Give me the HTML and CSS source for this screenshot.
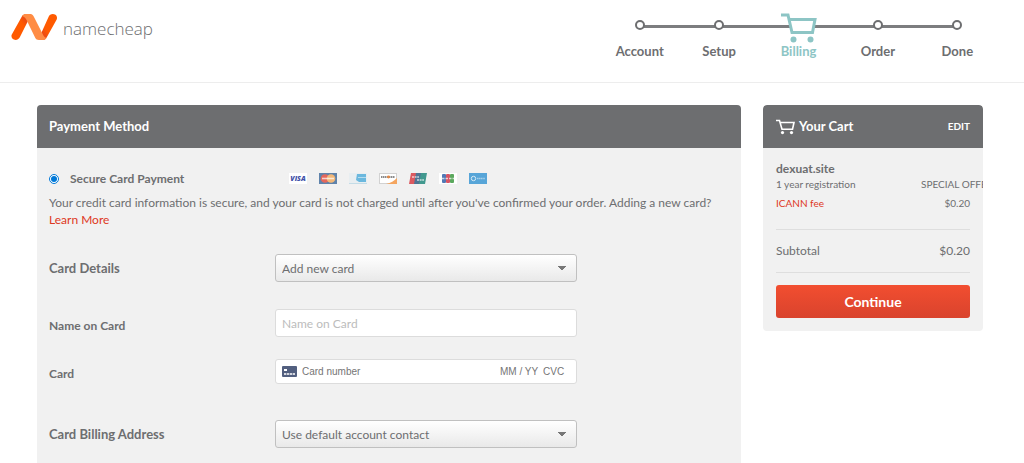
FILE: index.html
```html
<!DOCTYPE html>
<html lang="en">

<head>
    <meta charset="UTF-8">
    <meta name="viewport" content="width=device-width, initial-scale=1.0">
    <title>Billing - Namecheap</title>
    <link rel="stylesheet" href="styles.css">
</head>

<body>
    <header class="site-header">
        <a class="logo" href="#">
            <svg class="logo-mark" width="48" height="28" viewBox="0 0 48 28" aria-hidden="true">
                <defs>
                    <linearGradient id="leg-left" x1="0" y1="1" x2="1" y2="0">
                        <stop offset="0.6" stop-color="#ff5a00" />
                        <stop offset="1" stop-color="#d4362c" />
                    </linearGradient>
                    <linearGradient id="leg-right" x1="0" y1="1" x2="1" y2="0">
                        <stop offset="0" stop-color="#d4362c" />
                        <stop offset="0.4" stop-color="#ff5a00" />
                    </linearGradient>
                </defs>
                <path d="M11 3.2C12 1.6 14 1 16 1L19 4L9.2 23.6C8.2 26 6.6 27 4.6 27C1.4 27 -0.4 24 0.8 21.4Z" fill="url(#leg-left)" />
                <path d="M35.5 24.8C34.5 26.4 33.5 27 31.5 27L28.5 24L37.3 4.4C38.3 2 39.9 1 41.9 1C45.1 1 46.9 4 45.7 6.6Z" fill="url(#leg-right)" />
                <path d="M11 3C12 1.6 13.4 1 15.4 1H18.6C20.6 1 21.8 1.6 22.6 3.2L31.4 20.6C32.4 22.6 33.2 24.4 35.4 25C34.6 26.4 33.4 27 31.6 27H28C26 27 25 26.4 24.2 24.8L15.8 7.4C14.8 5.4 13.6 3.6 11 3Z" fill="#ff8c44" />
            </svg>
            <span class="logo-text">namecheap</span>
        </a>
        <ol class="steps">
            <li class="step"><span class="step-dot"></span>Account</li>
            <li class="step"><span class="step-dot"></span>Setup</li>
            <li class="step step-current" aria-current="step">
                <svg class="step-cart" width="36" height="30" viewBox="0 0 36 30" aria-hidden="true">
                    <path d="M8 5.5H34L31.5 19.5H11Z" fill="#fff" />
                    <path d="M0 2H7L11 19.5H31.5L34 6.5H8" fill="none" stroke="#8dc5c5" stroke-width="3" />
                    <circle cx="12.5" cy="26.5" r="3" fill="#8dc5c5" />
                    <circle cx="29.5" cy="26.5" r="3" fill="#8dc5c5" />
                </svg>
                Billing
            </li>
            <li class="step"><span class="step-dot"></span>Order</li>
            <li class="step"><span class="step-dot"></span>Done</li>
        </ol>
    </header>

    <main class="checkout">
        <section class="panel">
            <h2 class="panel-title">Payment Method</h2>
            <form class="panel-body">
                <div class="method">
                    <input class="method-radio" type="radio" id="secure-card" name="method" checked>
                    <label class="method-label" for="secure-card">Secure Card Payment</label>
                    <div class="brands">
                        <svg width="18" height="11" viewBox="0 0 18 11" role="img" aria-label="Visa">
                            <rect width="18" height="11" fill="#fff" />
                            <text class="brand-visa" x="9" y="8" text-anchor="middle">VISA</text>
                        </svg>
                        <svg width="18" height="11" viewBox="0 0 18 11" role="img" aria-label="MasterCard">
                            <rect width="18" height="11" fill="#5f83ab" />
                            <circle cx="6" cy="5.5" r="4.3" fill="#e4675c" />
                            <circle cx="12" cy="5.5" r="4.3" fill="#f3b878" />
                            <path d="M3 5.5H15" stroke="#fff" stroke-width="1.6" opacity="0.7" />
                        </svg>
                        <svg width="18" height="11" viewBox="0 0 18 11" role="img" aria-label="American Express">
                            <rect width="18" height="11" fill="#e8eef1" />
                            <path d="M8 1H17V9H10L7 7Z" fill="#6bb8de" />
                            <path d="M9 4.5H17" stroke="#b5dcee" />
                            <path d="M0 10.5H18" stroke="#c4dce7" />
                        </svg>
                        <svg width="18" height="11" viewBox="0 0 18 11" role="img" aria-label="Discover">
                            <rect x="0.5" y="0.5" width="17" height="10" fill="#fff" stroke="#d2d2d2" />
                            <path d="M18 5V11H7C12 10 15 8 18 5Z" fill="#f4a55f" />
                            <path d="M2 4H16" stroke="#8b8b8b" stroke-width="2" stroke-dasharray="1.5 0.5" />
                            <circle cx="9.5" cy="4" r="1.4" fill="#e88a45" />
                        </svg>
                        <svg width="18" height="11" viewBox="0 0 18 11" role="img" aria-label="UnionPay">
                            <path d="M2 0H8L6 11H0Z" fill="#dc5960" />
                            <path d="M7 0H13L11 11H5Z" fill="#4f7594" />
                            <path d="M12 0H18L16 11H10Z" fill="#42998f" />
                            <path d="M3 4H10M8 7H15" stroke="#fff" stroke-width="1.6" stroke-dasharray="2 0.6" opacity="0.7" />
                        </svg>
                        <svg width="18" height="11" viewBox="0 0 18 11" role="img" aria-label="JCB">
                            <rect width="18" height="11" fill="#fff" />
                            <rect x="3" y="1" width="4" height="9" rx="1" fill="#5279b5" />
                            <rect x="7" y="1" width="4" height="9" rx="1" fill="#d75564" />
                            <rect x="11" y="1" width="4" height="9" rx="1" fill="#5ba85d" />
                            <path d="M3 5.5H15" stroke="#fff" stroke-width="1.5" stroke-dasharray="2.5 1" opacity="0.7" />
                        </svg>
                        <svg width="18" height="11" viewBox="0 0 18 11" role="img" aria-label="Diners Club">
                            <rect width="18" height="11" fill="#57a5d8" />
                            <circle cx="4.5" cy="5.5" r="2.2" fill="none" stroke="#d7ebf6" />
                            <path d="M8 5.5H16" stroke="#a5d0ea" stroke-width="1.6" stroke-dasharray="1.4 0.4" />
                        </svg>
                    </div>
                </div>
                <p class="method-note">Your credit card information is secure, and your card is not charged until after you've confirmed your order. Adding a new card? <a href="#">Learn More</a></p>

                <div class="field">
                    <label class="field-label field-label-lg" for="card-details">Card Details</label>
                    <select class="control select" id="card-details">
                        <option>Add new card</option>
                    </select>
                </div>

                <div class="card-fields">
                    <div class="field">
                        <label class="field-label" for="card-name">Name on Card</label>
                        <input class="control" type="text" id="card-name" placeholder="Name on Card">
                    </div>
                    <div class="field">
                        <label class="field-label" for="card-number">Card</label>
                        <div class="control card-box">
                            <svg width="15" height="11" viewBox="0 0 15 11" aria-hidden="true">
                                <rect width="15" height="11" rx="1" fill="#525f7f" />
                                <rect x="2" y="3" width="3" height="2" fill="#fff" />
                                <path d="M2 8H13" stroke="#fff" stroke-width="1.4" stroke-dasharray="2.3 0.6" />
                            </svg>
                            <input class="card-number" type="text" id="card-number" placeholder="Card number">
                            <input class="card-expiry" type="text" placeholder="MM / YY" aria-label="Expiry date">
                            <input class="card-cvc" type="text" placeholder="CVC" aria-label="CVC">
                        </div>
                    </div>
                </div>

                <div class="field">
                    <label class="field-label field-label-lg" for="billing-address">Card Billing Address</label>
                    <select class="control select" id="billing-address">
                        <option>Use default account contact</option>
                    </select>
                </div>
            </form>
        </section>

        <aside class="cart">
            <div class="panel-title cart-title">
                <svg width="19" height="16" viewBox="0 0 19 16" aria-hidden="true">
                    <path d="M0 1.5H3.5L6 10.2H16.5L18 3.5H4.5" fill="none" stroke="#fff" stroke-width="1.6" />
                    <circle cx="6.5" cy="13.6" r="1.6" fill="#fff" />
                    <circle cx="15.5" cy="13.6" r="1.6" fill="#fff" />
                </svg>
                <h2>Your Cart</h2>
                <a class="cart-edit" href="#">EDIT</a>
            </div>
            <div class="cart-body">
                <h3 class="cart-domain">dexuat.site</h3>
                <div class="cart-line">
                    <span>1 year registration</span>
                    <span class="cart-offer">SPECIAL OFFER</span>
                </div>
                <div class="cart-line cart-fee">
                    <a href="#">ICANN fee</a>
                    <span>$0.20</span>
                </div>
                <div class="cart-subtotal">
                    <span>Subtotal</span>
                    <span>$0.20</span>
                </div>
                <button class="continue-btn" type="button">Continue</button>
            </div>
        </aside>
    </main>
</body>

</html>
```
FILE: styles.css
```css
* {
    margin: 0;
    padding: 0;
    box-sizing: border-box;
}

:root {
    --text-color: #6d6e70;
    --panel-bg: #f1f1f1;
    --title-bg: #6d6e70;
    --link-color: #de3723;
    --teal: #8dc5c5;
    --line-color: #dedede;
}

body {
    display: flex;
    flex-direction: column;
    min-height: 100vh;
    font-family: Lato, sans-serif;
    font-size: 12px;
    line-height: 17px;
    background-color: #fff;
    color: var(--text-color);
}

a {
    color: var(--link-color);
    text-decoration: none;
}

svg {
    display: block;
    flex-shrink: 0;
}

/* Header */
.site-header {
    display: flex;
    justify-content: space-between;
    align-items: flex-start;
    height: 83px;
    padding: 13px 27px 0 11px;
    border-bottom: 1px solid #ededed;
}

.logo {
    display: flex;
    align-items: center;
    gap: 4px;
    color: var(--text-color);
}

.logo-text {
    padding-top: 4px;
    font-family: "Open Sans", sans-serif;
    font-size: 17px;
    font-weight: 300;
    line-height: 24px;
}

.steps {
    display: flex;
    width: 397px;
    list-style: none;
}

.step {
    position: relative;
    flex: 1;
    display: flex;
    flex-direction: column;
    align-items: center;
    justify-content: space-between;
    height: 47px;
    font-size: 13px;
    font-weight: 700;
}

/* Line to the next step */
.step:not(:last-child)::before {
    content: "";
    position: absolute;
    top: 12px;
    left: 50%;
    width: 100%;
    height: 3px;
    background-color: #7c7d7f;
}

.step-dot {
    position: relative;
    width: 10px;
    height: 10px;
    margin-top: 7px;
    border: 2px solid var(--title-bg);
    border-radius: 50%;
    background-color: #fff;
}

.step-cart {
    position: relative;
    z-index: 1;
}

.step-current {
    color: var(--teal);
}

/* Checkout columns */
.checkout {
    flex: 1;
    display: grid;
    grid-template-columns: 1fr 220px;
    gap: 22px;
    padding: 22px 41px 0 37px;
}

.panel-title {
    height: 43px;
    padding: 0 12px;
    border-radius: 4px 4px 0 0;
    background-color: var(--title-bg);
    color: #fff;
    font-size: 13px;
    line-height: 43px;
}

.panel {
    background-color: var(--panel-bg);
    border-radius: 4px 4px 0 0;
}

.panel-body {
    padding: 22px 12px 14px;
}

.method {
    display: flex;
    align-items: center;
    margin-bottom: 7px;
}

.method-radio {
    width: 10px;
    height: 10px;
    margin-right: 11px;
    accent-color: #0078d7;
}

.method-label {
    width: 219px;
    font-weight: 700;
}

.brands {
    display: flex;
    gap: 12px;
}

.brand-visa {
    font-family: "Open Sans", sans-serif;
    font-size: 7px;
    font-style: italic;
    font-weight: 800;
    fill: #4150a8;
}

.method-note {
    margin-bottom: 26px;
}

.field {
    display: grid;
    grid-template-columns: 226px 302px;
    align-items: center;
}

.card-fields {
    display: grid;
    gap: 22px;
    margin: 27px 0 36px;
}

.field-label {
    padding-top: 4px;
    font-weight: 700;
}

.field-label-lg {
    padding-top: 0;
    font-size: 13px;
}

.control {
    width: 100%;
    height: 28px;
    padding: 0 6px;
    border: 1px solid #dcdcdc;
    border-radius: 3px;
    background-color: #fff;
    color: var(--text-color);
    font-family: inherit;
    font-size: 12px;
}

.control::placeholder {
    color: #bcbcbc;
}

.select {
    appearance: none;
    border-color: #c0c0c0;
    /* arrow drawn with two triangles */
    background-image:
        linear-gradient(to bottom left, #777 50%, transparent 51%),
        linear-gradient(to bottom right, #777 50%, transparent 51%),
        linear-gradient(#fff, #e9e9e9);
    background-position: right 14px center, right 10px center, 0 0;
    background-size: 4px 4px, 4px 4px, 100% 100%;
    background-repeat: no-repeat;
}

.card-box {
    display: flex;
    align-items: center;
    height: 25px;
    padding-right: 11px;
}

.card-box input {
    min-width: 0;
    border: none;
    background: none;
    color: var(--text-color);
    font-family: "Liberation Sans", Arial, sans-serif;
    font-size: 10px;
}

.card-box input::placeholder {
    color: #757575;
}

.card-box .card-number {
    flex: 1;
    margin-left: 5px;
}

.card-box .card-expiry {
    width: 43px;
}

.card-box .card-cvc {
    width: 22px;
}

/* Cart */
.cart {
    align-self: start;
    overflow: hidden;
    border-radius: 4px;
    background-color: var(--panel-bg);
}

.cart-title {
    display: flex;
    align-items: center;
    gap: 4px;
    padding: 0 13px;
}

.cart-title h2 {
    font-size: 13px;
}

.cart-edit {
    margin-left: auto;
    color: #fff;
    font-size: 10px;
    font-weight: 700;
}

.cart-body {
    padding: 13px;
}

.cart-domain {
    font-size: 12px;
    line-height: 16px;
}

.cart-line {
    display: flex;
    justify-content: space-between;
    font-size: 10px;
    line-height: 15px;
    white-space: nowrap;
}

.cart-offer {
    width: 49px;
}

.cart-fee {
    margin-top: 4px;
    padding-bottom: 18px;
}

.cart-subtotal {
    display: flex;
    justify-content: space-between;
    margin-bottom: 12px;
    padding: 12px 0 13px;
    border-top: 1px solid var(--line-color);
    border-bottom: 1px solid var(--line-color);
}

.continue-btn {
    width: 100%;
    height: 33px;
    border: none;
    border-radius: 3px;
    background: linear-gradient(#f24e30, #d9432d);
    color: #fff;
    font-family: inherit;
    font-size: 14px;
    font-weight: 700;
    cursor: pointer;
}
```
